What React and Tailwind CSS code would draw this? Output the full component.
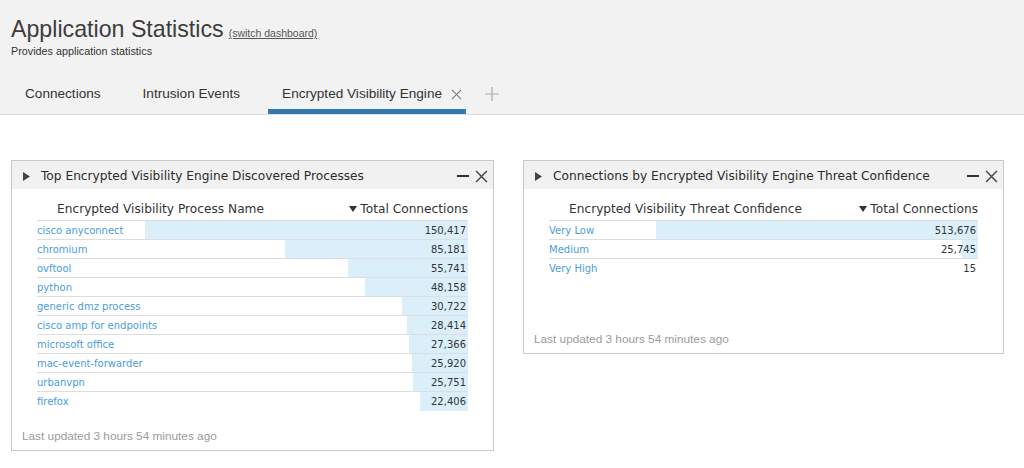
import React from "react";

const processes = [
    { name: "cisco anyconnect", value: 150417 },
    { name: "chromium", value: 85181 },
    { name: "ovftool", value: 55741 },
    { name: "python", value: 48158 },
    { name: "generic dmz process", value: 30722 },
    { name: "cisco amp for endpoints", value: 28414 },
    { name: "microsoft office", value: 27366 },
    { name: "mac-event-forwarder", value: 25920 },
    { name: "urbanvpn", value: 25751 },
    { name: "firefox", value: 22406 },
];

const confidence = [
    { name: "Very Low", value: 513676 },
    { name: "Medium", value: 25745 },
    { name: "Very High", value: 15 },
];

const helv = { fontFamily: '"Liberation Sans", Arial, sans-serif' };
const verd = { fontFamily: '"DejaVu Sans", Verdana, sans-serif' };

function CloseIcon({ size = 13, color = "#444", width = 1.3 }) {
    return (
        <svg width={size} height={size} viewBox="0 0 12 12">
            <path d="M1 1 L11 11 M11 1 L1 11" stroke={color} strokeWidth={width} fill="none" />
        </svg>
    );
}

function Widget({ title, column, rows, width, minBody }) {
    const max = Math.max(...rows.map((r) => r.value));
    return (
        <div className={`${width} border border-[#c9c9c9] bg-white`}>
            <div className="h-[28px] bg-[#f1f1f1] flex items-center pl-[11px] pr-[5px] pt-[2px]">
                <svg width="7" height="9" viewBox="0 0 7 9" className="mr-[11px]">
                    <polygon points="0,0 7,4.5 0,9" fill="#444" />
                </svg>
                <span className="text-[12.2px] text-[#2b2b2b] flex-1" style={verd}>{title}</span>
                <div className="w-[12px] h-[2px] bg-[#333] mr-[6px]" />
                <CloseIcon />
            </div>
            <div className="px-[25px] pt-[9px]">
                <div className="h-[23px] flex items-center pt-[1px] border-b border-[#dcdcdc] text-[12.2px] text-[#333]" style={verd}>
                    <span className="pl-[20px] flex-1">{column}</span>
                    <span className="flex items-center gap-[3px]">
                        <svg width="8" height="6" viewBox="0 0 8 6">
                            <polygon points="0,0 8,0 4,6" fill="#333" />
                        </svg>
                        Total Connections
                    </span>
                </div>
                <div className={minBody}>
                    {rows.map((r, i) => (
                        <div
                            key={r.name}
                            className={`relative h-[19px] flex items-center text-[10px] ${i < rows.length - 1 ? "border-b border-[#dedede]" : ""}`}
                            style={verd}
                        >
                            <div
                                className="absolute right-0 top-0 bottom-0 bg-[#dbeffb]"
                                style={{ width: `${(r.value / max) * 75}%` }}
                            />
                            <span className="relative text-[#4b9dd8] flex-1">{r.name}</span>
                            <span className="relative text-[#333] pr-[2px]">{r.value.toLocaleString("en-US")}</span>
                        </div>
                    ))}
                </div>
            </div>
            <div className="px-[10px] pt-[18px] pb-[7px] text-[11.8px] text-[#9b9b9b] leading-[14px]" style={helv}>
                Last updated 3 hours 54 minutes ago
            </div>
        </div>
    );
}

export default function App() {
    return (
        <div className="w-[1024px] h-[468px] bg-white overflow-hidden" style={helv}>
            <div className="bg-[#f2f2f2] border-b border-[#dddddd] h-[115px] flex flex-col">
                <div className="pl-[11px] pt-[16px]">
                    <div className="flex items-baseline gap-[5px]">
                        <span className="text-[23.2px] leading-[26px] text-[#3c3c3c]">Application Statistics</span>
                        <span className="text-[10.5px] text-[#555] underline">(switch dashboard)</span>
                    </div>
                    <div className="text-[10.8px] text-[#333] mt-[1px]">Provides application statistics</div>
                </div>
                <div className="mt-auto flex items-end pl-[11px] gap-[14px] text-[13.6px] text-[#333]">
                    <div className="px-[14px] h-[35px] flex items-center border-b-[5px] border-transparent">Connections</div>
                    <div className="px-[14px] h-[35px] flex items-center border-b-[5px] border-transparent">Intrusion Events</div>
                    <div className="pl-[14px] pr-[4px] h-[35px] flex items-center border-b-[5px] border-[#3679ae]">
                        Encrypted Visibility Engine
                        <span className="ml-[9px] flex">
                            <CloseIcon size={11} color="#777" width={1.1} />
                        </span>
                    </div>
                    <div className="h-[35px] flex items-center pl-[5px] border-b-[5px] border-transparent">
                        <svg width="14" height="14" viewBox="0 0 14 14">
                            <path d="M7 0 V14 M0 7 H14" stroke="#aaa" strokeWidth="1.2" />
                        </svg>
                    </div>
                </div>
            </div>
            <div className="flex items-start gap-[29px] pl-[11px] pt-[45px]">
                <Widget
                    title="Top Encrypted Visibility Engine Discovered Processes"
                    column="Encrypted Visibility Process Name"
                    rows={processes}
                    width="w-[483px]"
                    minBody=""
                />
                <Widget
                    title="Connections by Encrypted Visibility Engine Threat Confidence"
                    column="Encrypted Visibility Threat Confidence"
                    rows={confidence}
                    width="w-[481px]"
                    minBody="min-h-[93px]"
                />
            </div>
        </div>
    );
}
